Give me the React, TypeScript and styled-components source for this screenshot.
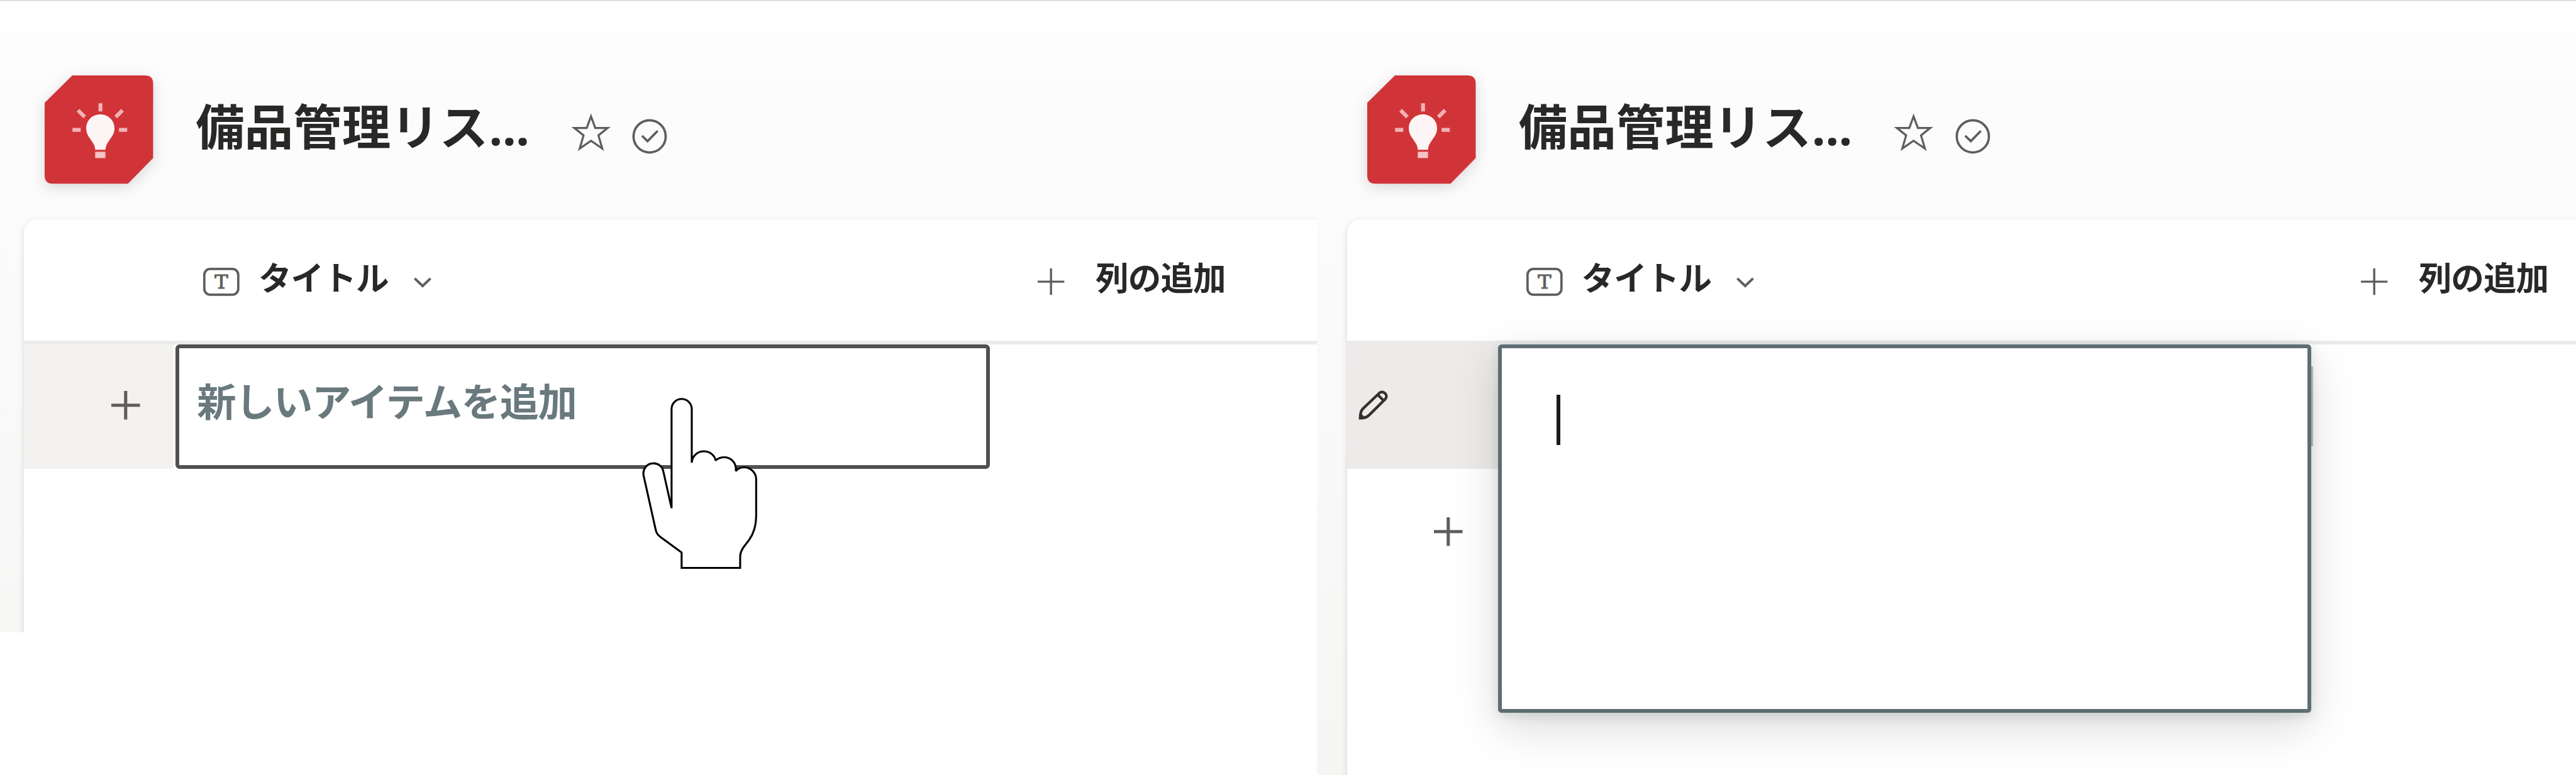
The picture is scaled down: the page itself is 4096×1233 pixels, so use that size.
import React from 'react';
import styled, { createGlobalStyle } from 'styled-components';

/* Design units to CSS pixels. */
const u = (n: number) => `${+((n * 4096) / 4400).toFixed(3)}px`;

const GlobalStyle = createGlobalStyle`
  *, *::before, *::after { box-sizing: border-box; }
  html, body { margin: 0; background: #fff; }
  body {
    font-family: "Noto Sans CJK JP", "Noto Sans", sans-serif;
    color: #292827;
  }
  svg { display: block; flex: none; overflow: visible; }
`;

const Page = styled.main`
  display: flex;
  align-items: flex-start;
  width: 4096px;
  height: 1233px;
  overflow: hidden;
  background: #fff;
`;

const Panel = styled.section<{ $width: number; $height: number; $inset: number }>`
  flex: none;
  display: flex;
  flex-direction: column;
  width: ${p => u(p.$width)};
  height: ${p => u(p.$height)};
  padding-left: ${p => u(p.$inset)};
  overflow: hidden;
  border-top: ${u(3)} solid #dfdfdf;
  background: linear-gradient(#ffffff 0, #fcfcfc ${u(150)}, #fbfbfb ${u(400)}, #f7f7f6 ${u(1081)}, #f5f5f4 ${u(1325)});
`;

const ListHeader = styled.header`
  flex: none;
  display: flex;
  align-items: flex-start;
  height: ${u(372.5)};
  padding: ${u(126.3)} 0 0 ${u(76)};
`;

const Logo = styled.svg`
  width: ${u(185.3)};
  height: ${u(185)};
  filter: drop-shadow(0 ${u(6)} ${u(12)} rgba(0, 0, 0, 0.14));
`;

const ListTitle = styled.h1`
  flex: none;
  width: ${u(574)};
  margin: ${u(34)} 0 0 ${u(73)};
  font-size: ${u(83.3)};
  line-height: ${u(100)};
  font-weight: 700;
  white-space: nowrap;
`;

const Dots = styled.span`
  margin-left: ${u(1)};
  font-family: "Open Sans", sans-serif;
  font-weight: 700;
  letter-spacing: ${u(-0.8)};
`;

const Glyph = styled.svg<{ $w: number; $h: number; $top?: number; $left?: number }>`
  width: ${p => u(p.$w)};
  height: ${p => u(p.$h)};
  margin-top: ${p => u(p.$top ?? 0)};
  margin-left: ${p => u(p.$left ?? 0)};
  fill: none;
  stroke: #605e5c;
`;

const Card = styled.div`
  flex: 1;
  margin-left: ${u(41)};
  background: #fff;
  border-top-left-radius: ${u(22)};
  box-shadow: 0 ${u(5.4)} ${u(13)} rgba(0, 0, 0, 0.11), 0 ${u(1)} ${u(4)} rgba(0, 0, 0, 0.06);
`;

const ColumnBar = styled.div`
  display: flex;
  align-items: flex-start;
  height: ${u(214.5)};
  padding: ${u(54)} 0 0 ${u(306)};
  border-bottom: ${u(7)} solid #ecebe9;
`;

const ColumnName = styled.div<{ $left: number; $width?: number }>`
  flex: none;
  width: ${p => (p.$width ? u(p.$width) : 'auto')};
  margin-top: ${u(1.5)};
  margin-left: ${p => u(p.$left)};
  font-size: ${u(56.5)};
  line-height: ${u(84)};
  letter-spacing: ${u(-1)};
  font-weight: 700;
  white-space: nowrap;
`;

const Row = styled.div`
  position: relative;
  display: flex;
  height: ${u(212)};
`;

const Gutter = styled.div<{ $bg: string; $w: number; $pad: number }>`
  display: flex;
  align-items: center;
  flex: none;
  width: ${p => u(p.$w)};
  padding-left: ${p => u(p.$pad)};
  background: ${p => p.$bg};
`;

const NewItemField = styled.div`
  flex: none;
  width: ${u(1391.5)};
  margin-left: ${u(3.5)};
  padding: ${u(38)} 0 0 ${u(30.5)};
  border: ${u(6.6)} solid #52504e;
  border-radius: ${u(7)};
  background: #fff;
  color: #69797e;
  font-size: ${u(67)};
  line-height: ${u(100)};
  letter-spacing: ${u(-1.5)};
  font-weight: 700;
  white-space: nowrap;
`;

const HandPointer = styled.svg`
  position: absolute;
  left: ${u(1019)};
  top: ${u(50)};
  width: ${u(260)};
  height: ${u(360)};
`;

const EditPopup = styled.div`
  position: absolute;
  left: ${u(257.6)};
  top: ${u(-0.5)};
  width: ${u(1389)};
  height: ${u(629.5)};
  padding: ${u(79)} 0 0 ${u(93.5)};
  border: ${u(6.6)} solid #5c6d73;
  border-radius: ${u(6)};
  background: #fff;
  box-shadow: 0 ${u(24)} ${u(76)} rgba(0, 0, 0, 0.15), 0 ${u(5)} ${u(18)} rgba(0, 0, 0, 0.108);
`;

const Caret = styled.div`
  width: ${u(6.7)};
  height: ${u(86)};
  background: #1b1a19;
`;

const CellEdge = styled.div`
  position: absolute;
  left: ${u(1644)};
  top: ${u(37)};
  width: ${u(6.5)};
  height: ${u(137)};
  background: #c4c4c4;
`;

function ListLogo() {
  return (
    <Logo viewBox="0 0 185.3 185">
      <path
        d="M47.3 0H171Q185.3 0 185.3 14V141.4L142.3 185H14Q0 185 0 171V46.7Z"
        fill="#d13438"
      />
      <path
        d="M95 66.5C81 66.5 71 77 71 90C71 99 74.500 104 79 110C83 116 86.300 120 86.300 127H104C104 120 107 116 111 110C115.500 104 119.300 99 119.300 90C119.300 77 109 66.500 95 66.500Z"
        fill="#fdf5f5"
      />
      <rect x="86.300" y="130.500" width="17.500" height="10.700" fill="#f3c3c5" />
      <path
        d="M95.300 47.500V61.500M47.500 93H61.500M127 93H141M57 59.500L68.500 71M133 59.500L121.500 71"
        stroke="#f0b3b5"
        strokeWidth="6.600"
        fill="none"
      />
    </Logo>
  );
}

function StarIcon() {
  return (
    <Glyph viewBox="0 0 66 66" $w={66} $h={66} $top={65} $left={68}>
      <path
        d="M33 5.500L40.300 25.300H61.500L45.700 38L52.300 60.500L33 47.300L13.700 60.500L20.300 38L4.500 25.300H25.700Z"
        strokeWidth="3.500"
      />
    </Glyph>
  );
}

function CheckCircleIcon() {
  return (
    <Glyph viewBox="0 0 60 60" $w={60} $h={60} $top={74.3} $left={37.500} strokeWidth="4">
      <circle cx="30" cy="30" r="27.500" />
      <path d="M17 29L26.500 38.300L43.700 20.700" />
    </Glyph>
  );
}

const TypeLetter = styled.text`
  font-family: "DejaVu Serif", serif;
  font-size: 31px;
  fill: #605e5c;
  stroke: #605e5c;
  stroke-width: 1px;
`;

function TextTypeIcon() {
  return (
    <Glyph viewBox="0 0 62 48" $w={62} $h={48} $top={29.500}>
      <rect x="2" y="2" width="58" height="44" rx="10" strokeWidth="4" />
      <TypeLetter x="19.500" y="35.300" textLength="23" lengthAdjust="spacingAndGlyphs">
        T
      </TypeLetter>
    </Glyph>
  );
}

function ChevronIcon() {
  return (
    <Glyph viewBox="0 0 30 18" $w={30} $h={18} $top={45} $left={41}>
      <path d="M1.500 2L15 15L28.500 2" strokeWidth="4.300" />
    </Glyph>
  );
}

function PlusIcon({ size, stroke, top, left }: { size: number; stroke: number; top?: number; left?: number }) {
  return (
    <Glyph viewBox="0 0 50 50" $w={size} $h={size} $top={top} $left={left}>
      <path d="M25 0V50M0 25H50" strokeWidth={stroke} />
    </Glyph>
  );
}

function PencilIcon() {
  return (
    <Glyph viewBox="0 0 50 50" $w={50} $h={50} $top={-5}>
      <path
        d="M3 46.500C3 40 4 34 7.500 30.500L35.500 3.800C38.500 1.200 42.500 1.200 45.500 4C48.500 7 48.500 11 45.800 14L18 41.500C14.500 45 9 46.500 3 46.500ZM33 6.500L43 16.500"
        stroke="#323130"
        strokeWidth="4.600"
      />
      <path d="M2 47.500L3.500 37.500L11.500 45.500Z" fill="#323130" stroke="none" />
    </Glyph>
  );
}

function PointingHand() {
  return (
    <HandPointer viewBox="0 0 780 1080">
      <path
        d="M260.500 688V180C260.500 150 284 128 312 128C340 128 364 150 364 180V455C365 422 392 396.500 425 396.500C458 396.500 482 418 486 443C498 433 513 427 530 427C564 427 590 453 590 487V498C600 485 615 478.500 632 478.500C666 478.500 694 506 694 540V730C694 775 683 816 657 852L630 887C618 904 612 918 612 938V994H312V915L199 832C188 823 182 813 179 798L117 520C111 488 134 458 168 458C192 458 213 474 218 498Z"
        fill="#fff"
        stroke="#000"
        strokeWidth="10"
        strokeLinejoin="miter"
        strokeMiterlimit={2}
      />
    </HandPointer>
  );
}

function Heading() {
  return (
    <ListHeader>
      <ListLogo />
      <ListTitle>
        備品管理リス<Dots>...</Dots>
      </ListTitle>
      <StarIcon />
      <CheckCircleIcon />
    </ListHeader>
  );
}

function Columns() {
  return (
    <ColumnBar>
      <TextTypeIcon />
      <ColumnName $left={32.500} $width={224}>
        タイトル
      </ColumnName>
      <ChevronIcon />
      <PlusIcon size={45.500} stroke={4} top={30} left={1036.500} />
      <ColumnName $left={53}>列の追加</ColumnName>
    </ColumnBar>
  );
}

export default function App() {
  return (
    <>
      <GlobalStyle />
      <Page>
        <Panel $width={2249} $height={1081} $inset={0}>
          <Heading />
          <Card>
            <Columns />
            <Row>
              <Gutter $bg="#f3f2f1" $w={255} $pad={149}>
                <PlusIcon size={49} stroke={5.600} top={-4} />
              </Gutter>
              <NewItemField>新しいアイテムを追加</NewItemField>
              <PointingHand />
            </Row>
          </Card>
        </Panel>
        <Panel $width={2151} $height={1325} $inset={10.700}>
          <Heading />
          <Card>
            <Columns />
            <Row>
              <Gutter $bg="#ecebe9" $w={262} $pad={19.500}>
                <PencilIcon />
              </Gutter>
              <CellEdge />
              <EditPopup>
                <Caret />
              </EditPopup>
            </Row>
            <Row>
              <Gutter $bg="transparent" $w={257} $pad={149}>
                <PlusIcon size={49} stroke={5.600} top={3} />
              </Gutter>
            </Row>
          </Card>
        </Panel>
      </Page>
    </>
  );
}
